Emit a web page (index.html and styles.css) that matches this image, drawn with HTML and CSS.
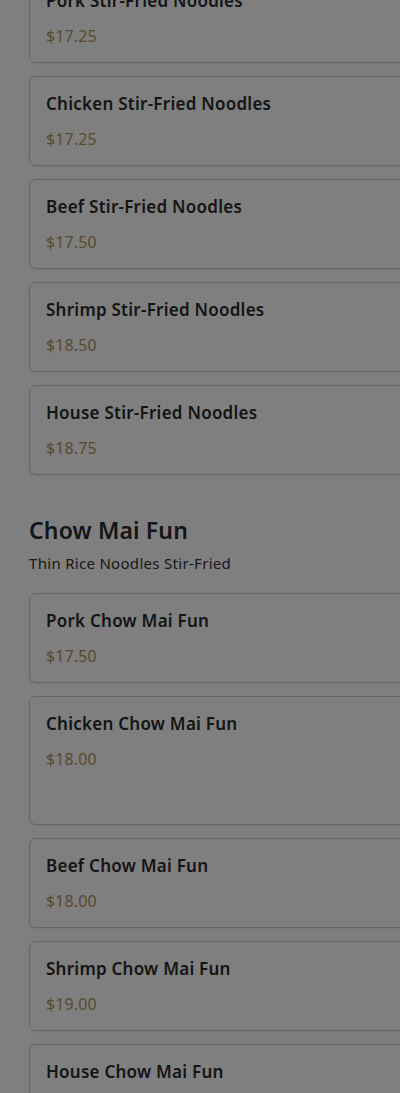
FILE: index.html
```html
<!DOCTYPE html>
<html>
<head>
<meta charset="utf-8">
<link rel="stylesheet" href="styles.css">
</head>
<body>
<main class="menu">
  <section class="section first">
    <div class="items">
      <div class="card"><div class="name">Pork Stir-Fried Noodles</div><div class="price">$17.25</div></div>
      <div class="card"><div class="name">Chicken Stir-Fried Noodles</div><div class="price">$17.25</div></div>
      <div class="card"><div class="name">Beef Stir-Fried Noodles</div><div class="price">$17.50</div></div>
      <div class="card"><div class="name">Shrimp Stir-Fried Noodles</div><div class="price">$18.50</div></div>
      <div class="card"><div class="name">House Stir-Fried Noodles</div><div class="price">$18.75</div></div>
    </div>
  </section>
  <section class="section">
    <h2 class="heading">Chow Mai Fun</h2>
    <p class="subtitle">Thin Rice Noodles Stir-Fried</p>
    <div class="items">
      <div class="card"><div class="name">Pork Chow Mai Fun</div><div class="price">$17.50</div></div>
      <div class="card tall"><div class="name">Chicken Chow Mai Fun</div><div class="price">$18.00</div><div class="extra"></div></div>
      <div class="card"><div class="name">Beef Chow Mai Fun</div><div class="price">$18.00</div></div>
      <div class="card"><div class="name">Shrimp Chow Mai Fun</div><div class="price">$19.00</div></div>
      <div class="card"><div class="name">House Chow Mai Fun</div><div class="price">$19.50</div></div>
    </div>
  </section>
</main>
<div class="overlay"></div>
</body>
</html>
```
FILE: styles.css
```css
html, body {
  margin: 0;
  padding: 0;
  background: #ffffff;
  overflow: hidden;
  height: 1093px;
}
body {
  font-family: "Noto Sans", "Open Sans", sans-serif;
  color: #262626;
}
.menu {
  padding-left: 29px;
  width: 420px;
}
.section.first {
  margin-top: -27px;
}
.section {
  display: flex;
  flex-direction: column;
}
.items {
  display: flex;
  flex-direction: column;
  gap: 13px;
}
.card {
  border: 1px solid #cccccc;
  border-radius: 7px;
  background: #ffffff;
  box-shadow: 0 1px 3px rgba(0,0,0,0.08);
  padding: 15px 16px 14px 16px;
  height: 90px;
  box-sizing: border-box;
  display: flex;
  flex-direction: column;
}
.card.tall {
  height: 129px;
}
.name {
  font-size: 17px;
  font-weight: 600;
  line-height: 24px;
  letter-spacing: 0.25px;
  color: #2a2a2a;
}
.price {
  margin-top: 12px;
  font-size: 16px;
  line-height: 22px;
  letter-spacing: 0.1px;
  color: #b09560;
}
.heading {
  margin: 40px 0 0 0;
  font-size: 23px;
  font-weight: 600;
  line-height: 30px;
  letter-spacing: 0.15px;
  color: #2a2a2a;
}
.subtitle {
  margin: 8px 0 20px 0;
  font-size: 15px;
  line-height: 20px;
  letter-spacing: 0.3px;
  color: #333333;
}
.overlay {
  position: fixed;
  inset: 0;
  background: rgba(0,0,0,0.5);
}
```
